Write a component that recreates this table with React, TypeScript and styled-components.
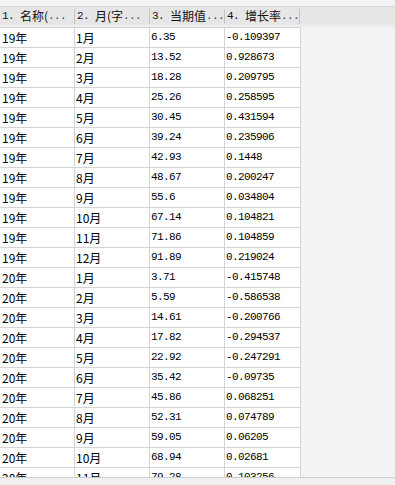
import styled, { createGlobalStyle } from "styled-components";

const GlobalStyle = createGlobalStyle`
	html, body {
		margin: 0;
		padding: 0;
		background: #f3f3f5;
	}
`;

type Row = [string, string, string, string];

const rows: Row[] = [
	["19年", "1月", "6.35", "-0.109397"],
	["19年", "2月", "13.52", "0.928673"],
	["19年", "3月", "18.28", "0.209795"],
	["19年", "4月", "25.26", "0.258595"],
	["19年", "5月", "30.45", "0.431594"],
	["19年", "6月", "39.24", "0.235906"],
	["19年", "7月", "42.93", "0.1448"],
	["19年", "8月", "48.67", "0.200247"],
	["19年", "9月", "55.6", "0.034804"],
	["19年", "10月", "67.14", "0.104821"],
	["19年", "11月", "71.86", "0.104859"],
	["19年", "12月", "91.89", "0.219024"],
	["20年", "1月", "3.71", "-0.415748"],
	["20年", "2月", "5.59", "-0.586538"],
	["20年", "3月", "14.61", "-0.200766"],
	["20年", "4月", "17.82", "-0.294537"],
	["20年", "5月", "22.92", "-0.247291"],
	["20年", "6月", "35.42", "-0.09735"],
	["20年", "7月", "45.86", "0.068251"],
	["20年", "8月", "52.31", "0.074789"],
	["20年", "9月", "59.05", "0.06205"],
	["20年", "10月", "68.94", "0.02681"],
	["20年", "11月", "79.28", "0.103256"],
];

const headers = [
	{ num: "1.", label: "名称(" },
	{ num: "2.", label: "月(字" },
	{ num: "3.", label: "当期值" },
	{ num: "4.", label: "增长率" },
];

export default function App() {
	return (
		<>
			<GlobalStyle />
			<Page>
				<Header>
					{headers.map((h) => (
						<HeaderCell key={h.num}>
							<HeaderNum>{h.num}</HeaderNum>
							{h.label}
							<Dots>...</Dots>
						</HeaderCell>
					))}
				</Header>
				<Body>
					<Table>
						{rows.map((r, i) => (
							<DataRow key={i}>
								<Cell>{r[0]}</Cell>
								<Cell>{r[1]}</Cell>
								<Cell mono>{r[2]}</Cell>
								<Cell mono>{r[3]}</Cell>
							</DataRow>
						))}
					</Table>
				</Body>
				<ScrollBar />
			</Page>
		</>
	);
}

const Page = styled.div`
	height: 485px;
	width: 395px;
	overflow: hidden;
	display: flex;
	flex-direction: column;
	padding-top: 6px;
	box-sizing: border-box;
	background: #f3f3f5;
`;

const Header = styled.div`
	display: flex;
	flex-shrink: 0;
	height: 18px;
	border-top: 1px solid #d9d9d9;
	border-bottom: 2px solid #eeeeee;
	background: #e6e6e6;
`;

const HeaderCell = styled.div`
	position: relative;
	display: flex;
	align-items: center;
	flex: 0 0 75px;
	box-sizing: border-box;
	padding-left: 2px;
	padding-right: 2px;
	font-family: "Noto Sans CJK SC", "Liberation Sans", sans-serif;
	font-size: 12px;
	line-height: 18px;
	color: #111;
	white-space: nowrap;
	overflow: hidden;
	&::after {
		content: "";
		position: absolute;
		z-index: 1;
		right: 0;
		top: 2px;
		bottom: 1px;
		width: 1px;
		background: #c4c4c4;
	}
`;

const HeaderNum = styled.span`
	width: 18px;
	flex-shrink: 0;
	font-family: "Liberation Mono", "DejaVu Sans Mono", monospace;
	font-size: 11px;
	letter-spacing: -0.6px;
`;

const Dots = styled.span`
	font-family: "Liberation Mono", "DejaVu Sans Mono", monospace;
	font-size: 11px;
	letter-spacing: -0.6px;
	color: #4a3a5a;
`;

const Body = styled.div`
	flex: 1;
	overflow: hidden;
`;

const Table = styled.div`
	width: 301px;
	background: #ffffff;
	border-top: 1px solid #d4d4d4;
`;

const DataRow = styled.div`
	display: grid;
	grid-template-columns: 75px 75px 75px 76px;
	height: 20px;
	box-sizing: border-box;
	border-bottom: 1px solid #d4d4d4;
`;

const Cell = styled.div<{ mono?: boolean }>`
	border-right: 1px solid #d4d4d4;
	padding-left: 1px;
	font-family: ${(p) =>
		p.mono
			? `"Liberation Mono", "DejaVu Sans Mono", monospace`
			: `"Noto Sans CJK SC", "Liberation Sans", sans-serif`};
	font-size: ${(p) => (p.mono ? "11px" : "12px")};
	letter-spacing: ${(p) => (p.mono ? "-0.6px" : "0")};
	line-height: 19px;
	color: #000;
	white-space: nowrap;
	overflow: hidden;
	&:first-child {
		padding-left: 2px;
	}
`;

const ScrollBar = styled.div`
	flex-shrink: 0;
	height: 7px;
	border-top: 1px solid #cfcfcf;
	background: #f0f0f0;
`;
